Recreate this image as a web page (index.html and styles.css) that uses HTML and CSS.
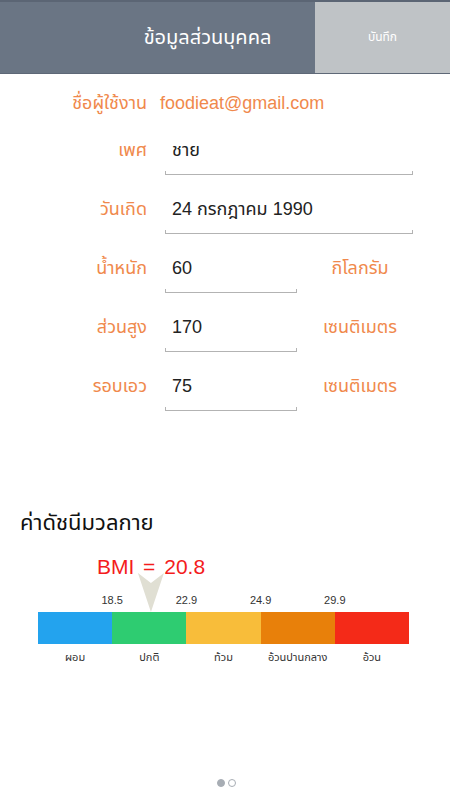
FILE: index.html
```html
<!DOCTYPE html>
<html lang="th">
<head>
    <meta charset="UTF-8">
    <meta name="viewport" content="width=device-width, initial-scale=1.0">
    <title>ข้อมูลส่วนบุคคล</title>
    <link rel="stylesheet" href="styles.css">
</head>
<body>
    <div class="page">
        <div class="header">
            <div class="title">ข้อมูลส่วนบุคคล</div>
            <div class="save">บันทึก</div>
        </div>

        <div class="profile">
            <div class="row user">
                <div class="label">ชื่อผู้ใช้งาน</div>
                <div class="email">foodieat@gmail.com</div>
            </div>
            <div class="row">
                <div class="label">เพศ</div>
                <div class="field wide">
                    <div class="value">ชาย</div>
                    <div class="line"></div>
                </div>
            </div>
            <div class="row">
                <div class="label">วันเกิด</div>
                <div class="field wide">
                    <div class="value">24 กรกฎาคม 1990</div>
                    <div class="line"></div>
                </div>
            </div>
            <div class="row">
                <div class="label">น้ำหนัก</div>
                <div class="field">
                    <div class="value">60</div>
                    <div class="line"></div>
                </div>
                <div class="unit">กิโลกรัม</div>
            </div>
            <div class="row">
                <div class="label">ส่วนสูง</div>
                <div class="field">
                    <div class="value">170</div>
                    <div class="line"></div>
                </div>
                <div class="unit">เซนติเมตร</div>
            </div>
            <div class="row">
                <div class="label">รอบเอว</div>
                <div class="field">
                    <div class="value">75</div>
                    <div class="line"></div>
                </div>
                <div class="unit">เซนติเมตร</div>
            </div>
        </div>

        <h2 class="section">ค่าดัชนีมวลกาย</h2>

        <div class="chart">
            <!-- 20.8 sits in the 18.5 - 22.9 band: 74 + 2.3 / 4.4 * 74 -->
            <div class="marker" style="left: 113px;">
                <div class="bmi">BMI = 20.8</div>
                <svg class="pointer" width="26" height="39" viewBox="0 0 26 39">
                    <path d="M0 0 L13 10 L26 0 L13 39 Z" fill="#e0dfd3"/>
                </svg>
            </div>
            <div class="ticks">
                <span>18.5</span>
                <span>22.9</span>
                <span>24.9</span>
                <span>29.9</span>
                <span></span>
            </div>
            <div class="bar">
                <div class="seg thin"></div>
                <div class="seg normal"></div>
                <div class="seg chubby"></div>
                <div class="seg fat"></div>
                <div class="seg obese"></div>
            </div>
            <div class="names">
                <span>ผอม</span>
                <span>ปกติ</span>
                <span>ท้วม</span>
                <span>อ้วนปานกลาง</span>
                <span>อ้วน</span>
            </div>
        </div>

        <div class="dots">
            <span class="dot active"></span>
            <span class="dot"></span>
        </div>
    </div>
</body>
</html>
```

FILE: styles.css
```css
body {
    margin: 0;
    padding: 0;
    background-color: #fff;
    font-family: 'Liberation Sans', 'Noto Sans Thai', 'Noto Sans', sans-serif;
    color: #222;
}

.page {
    display: flex;
    flex-direction: column;
    min-height: 100vh;
}

.header {
    display: flex;
    height: 74px;
    box-sizing: border-box;
    border-top: 2px solid #5b6574;
    border-bottom: 1px solid #5e6877;
    background-color: #6a7584;
}

.title {
    flex: 1;
    text-align: center;
    line-height: 71px;
    padding-left: 100px;
    font-size: 20px;
    color: #fff;
}

.save {
    width: 135px;
    text-align: center;
    line-height: 71px;
    font-size: 12px;
    color: #fff;
    background-color: #bfc3c6;
}

.profile {
    padding-top: 8px;
}

.row {
    display: flex;
    align-items: flex-start;
    margin-bottom: 13px;
}

.row.user {
    margin-bottom: 5px;
}

.label {
    width: 147px;
    text-align: right;
    line-height: 42px;
    font-size: 18px;
    color: #f0894c;
}

.email {
    margin-left: 13px;
    line-height: 42px;
    font-size: 18px;
    color: #f0894c;
}

.field {
    width: 132px;
    margin-left: 18px;
}

.field.wide {
    width: 248px;
}

.value {
    padding-left: 7px;
    line-height: 42px;
    font-size: 18px;
    color: #222;
}

.line {
    height: 3px;
    border: 1px solid #b3b3b3;
    border-top: none;
}

.unit {
    width: 126px;
    text-align: center;
    line-height: 42px;
    font-size: 18px;
    color: #f0894c;
}

.section {
    margin: 84px 0 0 20px;
    font-size: 22px;
    font-weight: normal;
    line-height: 30px;
    color: #111;
}

.chart {
    position: relative;
    width: 371px;
    margin: 17px 0 0 38px;
    padding-top: 38px;
}

.marker {
    position: absolute;
    top: 0;
    transform: translateX(-50%);
    display: flex;
    flex-direction: column;
    align-items: center;
}

.bmi {
    line-height: 24px;
    font-size: 21px;
    word-spacing: 3px;
    color: #f41c1c;
    white-space: nowrap;
}

.pointer {
    display: block;
    margin-top: -6px;
}

.ticks, .names {
    display: grid;
    grid-template-columns: repeat(5, 1fr);
    font-size: 11px;
    line-height: 14px;
    color: #333;
}

.ticks span {
    justify-self: end;
    transform: translateX(50%);
}

.names {
    margin-top: 6px;
    text-align: center;
}

.bar {
    display: flex;
    height: 32px;
    margin-top: 5px;
}

.seg {
    flex: 1;
}

.thin { background-color: #23a3ee; }
.normal { background-color: #2ecc71; }
.chubby { background-color: #f8bd3a; }
.fat { background-color: #e8800a; }
.obese { background-color: #f42a18; }

.dots {
    display: flex;
    justify-content: center;
    gap: 3px;
    margin-top: auto;
    padding: 0 0 13px 3px;
}

.dot {
    width: 8px;
    height: 8px;
    box-sizing: border-box;
    border-radius: 50%;
    border: 1px solid #a7adb4;
}

.dot.active {
    background-color: #a7adb4;
}
```
